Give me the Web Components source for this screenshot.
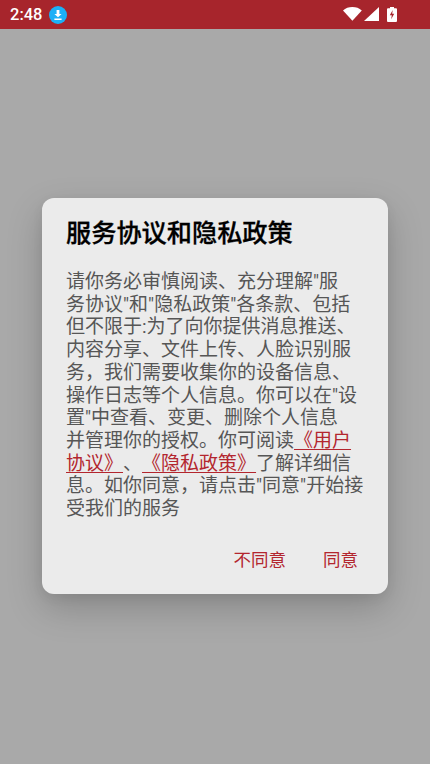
<!DOCTYPE html>
<html lang="zh">
<head>
<meta charset="utf-8">
<style>
html, body { margin: 0; height: 100%; }
body { background: #a9a9a9; font-family: Roboto, "Noto Sans CJK SC", sans-serif; }
#screen { height: 764px; display: flex; flex-direction: column; overflow: hidden; }
</style>
</head>
<body>
<div id="screen">
    <status-bar time="2:48"></status-bar>
    <dialog-overlay>
        <agreement-dialog heading="服务协议和隐私政策">
            请你务必审慎阅读、充分理解"服<br>务协议"和"隐私政策"各条款、包括<br>但不限于:为了向你提供消息推送、<br>内容分享、文件上传、人脸识别服<br>务，我们需要收集你的设备信息、<br>操作日志等个人信息。你可以在"设<br>置"中查看、变更、删除个人信息<br>并管理你的授权。你可阅读<dialog-link>《用户</dialog-link><br><dialog-link>协议》</dialog-link>、<dialog-link>《隐私政策》</dialog-link>了解详细信<br>息。如你同意，请点击"同意"开始接<br>受我们的服务
            <dialog-button slot="actions">不同意</dialog-button>
            <dialog-button slot="actions">同意</dialog-button>
        </agreement-dialog>
    </dialog-overlay>
</div>
<script>
class StatusBar extends HTMLElement {
    constructor() {
        super();
        const shadowRoot = this.attachShadow({mode: 'open'});
        shadowRoot.innerHTML = `
            <style>
                :host {
                    display: flex;
                    flex: none;
                    align-items: center;
                    box-sizing: border-box;
                    height: 28.500px;
                    padding: 1px 33px 0 10px;
                    background: #a7252c;
                    color: #fff;
                }
                #time { font: 500 16.500px/1 Roboto, sans-serif; }
                #download { margin-left: 7px; width: 18px; height: 18px; }
                #icons { margin: -1px 0 0 auto; display: flex; align-items: center; gap: 2px; }
                svg { display: block; }
            </style>
            <span id="time"></span>
            <svg id="download" viewBox="0 0 18 18">
                <circle cx="9" cy="9" r="9" fill="#1cb0f6"/>
                <path d="M7.600 4h2.800v4h2.200L9 11.300 5.400 8h2.200zM5.400 12.400h7.200v1.500H5.400z" fill="#fff"/>
            </svg>
            <div id="icons">
                <svg width="19" height="14" viewBox="0 0 19 14"><path d="M0 3.400C2.500 1.200 5.800 0 9.400 0s6.900 1.200 9.400 3.400L9.400 13.800z" fill="#fff"/></svg>
                <svg width="15" height="14" viewBox="0 0 15 14"><path d="M15 0v14H0z" fill="#fff"/></svg>
                <svg style="margin-left:6px" width="10" height="15" viewBox="0 0 10 15">
                    <path d="M3 0h4v1.300h2a1 1 0 0 1 1 1V14a1 1 0 0 1-1 1H1a1 1 0 0 1-1-1V2.300a1 1 0 0 1 1-1h2z" fill="#fff"/>
                    <path d="M5.700 3 2.800 8.300h2l-.6 3.900 3-5.500H5.200z" fill="#a7252c"/>
                </svg>
            </div>
        `;
        shadowRoot.querySelector('#time').textContent = this.getAttribute('time');
    }
}

class DialogOverlay extends HTMLElement {
    constructor() {
        super();
        const shadowRoot = this.attachShadow({mode: 'open'});
        shadowRoot.innerHTML = `
            <style>
                :host {
                    display: flex;
                    flex: 1;
                    justify-content: center;
                    padding-top: 169.500px;
                    background: #a9a9a9;
                }
            </style>
            <slot></slot>
        `;
    }
}

class AgreementDialog extends HTMLElement {
    constructor() {
        super();
        const shadowRoot = this.attachShadow({mode: 'open'});
        shadowRoot.innerHTML = `
            <style>
                :host {
                    display: block;
                    box-sizing: border-box;
                    width: 346px;
                    height: 396px;
                    padding: 20px 24px 0;
                    border-radius: 12px;
                    background: #ebebeb;
                    box-shadow: 0 14px 36px rgba(0, 0, 0, .2), 0 4px 12px rgba(0, 0, 0, .06);
                    font-family: Roboto, "Noto Sans CJK SC", sans-serif;
                    text-spacing-trim: space-all;
                }
                h2 {
                    margin: 0;
                    font-size: 25.200px;
                    font-weight: 500;
                    -webkit-text-stroke: .3px #000;
                    line-height: 31px;
                    color: #000;
                    white-space: nowrap;
                }
                #message {
                    margin-top: 22px;
                    font-size: 19px;
                    line-height: 22.700px;
                    color: #565656;
                    white-space: nowrap;
                }
                #actions {
                    display: flex;
                    justify-content: flex-end;
                    gap: 37px;
                    margin: 27px 6px 0 0;
                }
            </style>
            <h2></h2>
            <div id="message"><slot></slot></div>
            <div id="actions"><slot name="actions"></slot></div>
        `;
        shadowRoot.querySelector('h2').textContent = this.getAttribute('heading');
    }
}

class DialogLink extends HTMLElement {
    constructor() {
        super();
        const shadowRoot = this.attachShadow({mode: 'open'});
        // no whitespace round the slot, it would show up as an underlined space
        shadowRoot.innerHTML = `<style>
                :host { display: inline; color: #b3262e; text-decoration: underline; text-underline-offset: 2px; text-decoration-thickness: 1px; }
            </style><slot></slot>`;
    }
}

class DialogButton extends HTMLElement {
    constructor() {
        super();
        const shadowRoot = this.attachShadow({mode: 'open'});
        shadowRoot.innerHTML = `
            <style>
                :host { display: block; font-size: 17.500px; line-height: 24px; color: #b3262e; cursor: pointer; }
            </style>
            <slot></slot>
        `;
    }
}

customElements.define('status-bar', StatusBar);
customElements.define('dialog-overlay', DialogOverlay);
customElements.define('agreement-dialog', AgreementDialog);
customElements.define('dialog-link', DialogLink);
customElements.define('dialog-button', DialogButton);
</script>
</body>
</html>
